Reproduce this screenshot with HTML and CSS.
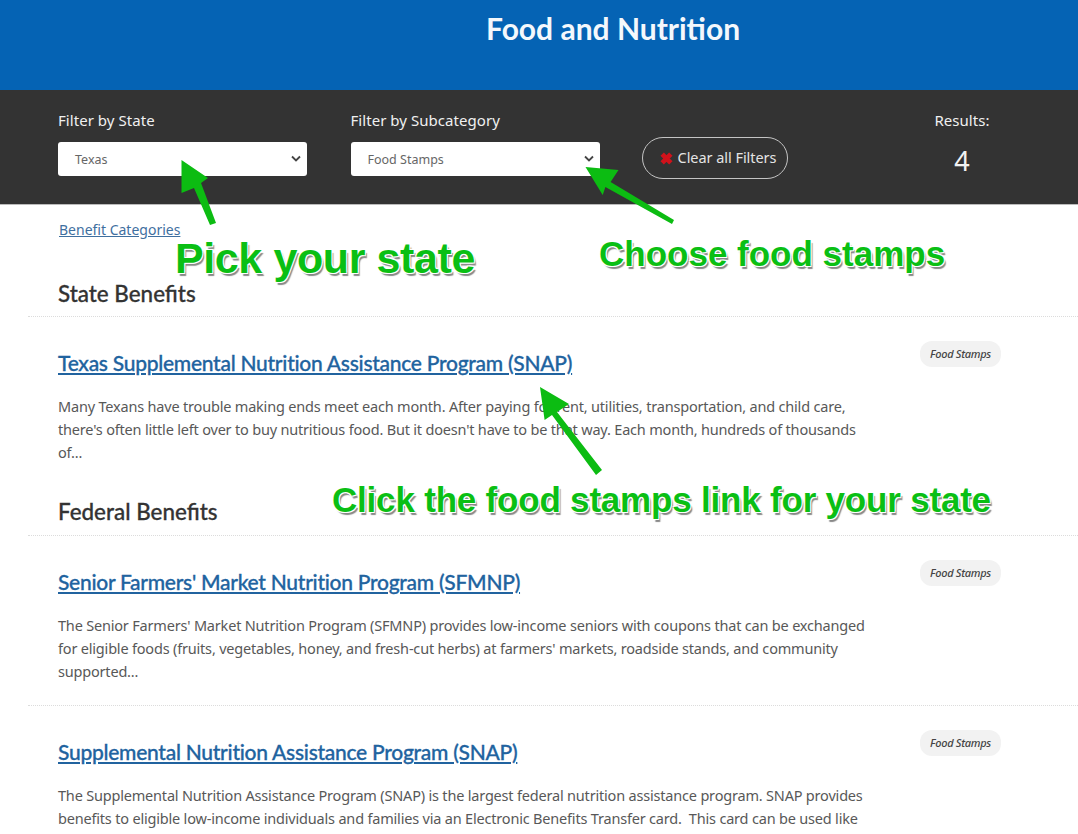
FILE: index.html
```html
<!DOCTYPE html>
<html lang="en">
<head>
<meta charset="utf-8">
<title>Food and Nutrition</title>
<link rel="stylesheet" href="styles.css">
</head>
<body>
<div class="page">
  <header class="hero"><h1>Food and Nutrition</h1></header>
  <section class="filters">
    <div class="filter">
      <label class="filter-label">Filter by State</label>
      <div class="select">Texas<svg class="chev" viewBox="0 0 10 6"><path d="M1 1l4 4 4-4" fill="none" stroke="#444" stroke-width="1.8"/></svg></div>
    </div>
    <div class="filter">
      <label class="filter-label">Filter by Subcategory</label>
      <div class="select">Food Stamps<svg class="chev" viewBox="0 0 10 6"><path d="M1 1l4 4 4-4" fill="none" stroke="#444" stroke-width="1.8"/></svg></div>
    </div>
    <button class="clear"><svg class="x" viewBox="0 0 12 12"><path d="M2 2l8 8M10 2l-8 8" stroke="#d0121b" stroke-width="4.4"/></svg>Clear all Filters</button>
    <div class="results"><div class="filter-label">Results:</div><div class="count">4</div></div>
  </section>
  <main class="content">
    <a class="crumb" href="#">Benefit Categories</a>
    <h2 class="group first">State Benefits</h2>
    <article class="benefit">
      <div class="body">
        <a class="title" href="#">Texas Supplemental Nutrition Assistance Program (SNAP)</a>
        <p>Many Texans have trouble making ends meet each month. After paying for rent, utilities, transportation, and child care, there's often little left over to buy nutritious food. But it doesn't have to be that way. Each month, hundreds of thousands of...</p>
      </div>
      <span class="tag">Food Stamps</span>
    </article>
    <h2 class="group">Federal Benefits</h2>
    <article class="benefit">
      <div class="body">
        <a class="title" href="#">Senior Farmers' Market Nutrition Program (SFMNP)</a>
        <p>The Senior Farmers' Market Nutrition Program (SFMNP) provides low-income seniors with coupons that can be exchanged for eligible foods (fruits, vegetables, honey, and fresh-cut herbs) at farmers' markets, roadside stands, and community supported...</p>
      </div>
      <span class="tag">Food Stamps</span>
    </article>
    <article class="benefit ruled">
      <div class="body">
        <a class="title" href="#">Supplemental Nutrition Assistance Program (SNAP)</a>
        <p>The Supplemental Nutrition Assistance Program (SNAP) is the largest federal nutrition assistance program. SNAP provides benefits to eligible low-income individuals and families via an Electronic Benefits Transfer card.&nbsp; This card can be used like</p>
      </div>
      <span class="tag">Food Stamps</span>
    </article>
  </main>
  <svg class="arrows" viewBox="0 0 1078 834">
    <path class="arrow" d="M181.5 160L208 178 201 183 216 223 210 225 194 188 181.5 193z"/>
    <path class="arrow" d="M585.5 167L618.5 170 610.6 182 674 220 672 224 605.4 187 602.7 195z"/>
    <path class="arrow" d="M540 387L569 404 557 412 602 470 596 475 552 415 544.6 420z"/>
  </svg>
  <div class="note note-state">Pick your state</div>
  <div class="note note-food">Choose food stamps</div>
  <div class="note note-link">Click the food stamps link for your state</div>
</div>
</body>
</html>
```
FILE: styles.css
```css
* { box-sizing: border-box; }
html, body { margin: 0; padding: 0; background: #fff; }
.page { position: relative; width: 1078px; height: 834px; overflow: hidden; font-family: "Noto Sans", sans-serif; }

.hero { height: 90px; background: #0563b4; padding-top: 10px; padding-left: 486px; }
.hero h1 { margin: 0; font: 700 30px/36px Lato, sans-serif; color: #f4f8fc; white-space: nowrap; }

.filters { height: 115px; background: #333; display: flex; padding: 20px 0 0 58px; border-bottom: 1px solid #bbb; }
.filter { width: 249px; margin-right: 43.5px; }
.filter-label { display: block; font: 400 15px/20px "Noto Sans", sans-serif; letter-spacing: 0.05px; color: #f0f0f0; }
.select { position: relative; margin-top: 12px; height: 34px; background: #fff; border-radius: 3px; padding-left: 17px; font-size: 12.5px; line-height: 35px; color: #666; }
.chev { position: absolute; right: 6px; top: 13px; width: 10px; height: 7px; }
.clear { width: 146px; height: 42px; margin: 27px 0 0 -1px; padding: 0 0 2px 6px; background: transparent; border: 1px solid #c4c4c4; border-radius: 21px; color: #e4e4e4; font: 400 14.5px/20px "Noto Sans", sans-serif; letter-spacing: -0.05px; display: flex; align-items: center; justify-content: center; gap: 5px; }
.x { width: 13px; height: 13px; margin-top: 3px; }
.results { margin-left: 146px; width: 56px; text-align: center; white-space: nowrap; }
.count { font: 400 27px/32px "Noto Sans", sans-serif; color: #f2f2f2; margin-top: 15px; }

.content { padding-top: 15px; }
.crumb { display: block; margin-left: 59px; font-size: 14px; line-height: 20px; letter-spacing: 0; color: #3f6f9f; }
.group { margin: 33px 0 0 28px; padding: 0 0 8px 30px; font: 500 22.4px/30px Lato, sans-serif; color: #333; -webkit-text-stroke: 0.3px #333; border-bottom: 1px dotted #dcdcdc; }
.group.first { margin-top: 39px; padding-bottom: 7px; }
.benefit { display: flex; margin-left: 28px; padding: 24px 77px 0 30px; }
.benefit.ruled { border-top: 1px dotted #dcdcdc; margin-top: 22px; }
.body { width: 815px; padding-top: 7px; }
.title { display: block; font: 500 21px/30px Lato, sans-serif; letter-spacing: -0.27px; color: #21639f; -webkit-text-stroke: 0.3px #21639f; text-decoration: underline; white-space: nowrap; }
.body p { margin: 17px 0 0; font-size: 14.5px; line-height: 23px; letter-spacing: -0.19px; color: #585858; }
.tag { flex: none; margin-left: 47px; width: 81px; height: 26px; background: #f2f2f2; border-radius: 12px; text-align: center; font-size: 11px; line-height: 26px; font-style: italic; font-weight: 500; letter-spacing: -0.3px; color: #444; white-space: nowrap; }

.arrows { position: absolute; left: 0; top: 0; width: 1078px; height: 834px; pointer-events: none; }
.arrow { fill: #0cbc12; }
.note { position: absolute; font-family: "Liberation Sans", sans-serif; font-weight: 700; color: #0abf14; white-space: nowrap; text-shadow: 1px 1px 0 #fff, -1px -1px 0 #fff, 1px -1px 0 #fff, -1px 1px 0 #fff, 2px 3px 1px #888; }
.note-state { left: 175px; top: 233px; font-size: 43px; line-height: 50px; letter-spacing: -0.4px; }
.note-food { left: 599px; top: 234px; font-size: 35px; line-height: 40px; }
.note-link { left: 332px; top: 479px; font-size: 35px; line-height: 42px; letter-spacing: -0.2px; }
```
